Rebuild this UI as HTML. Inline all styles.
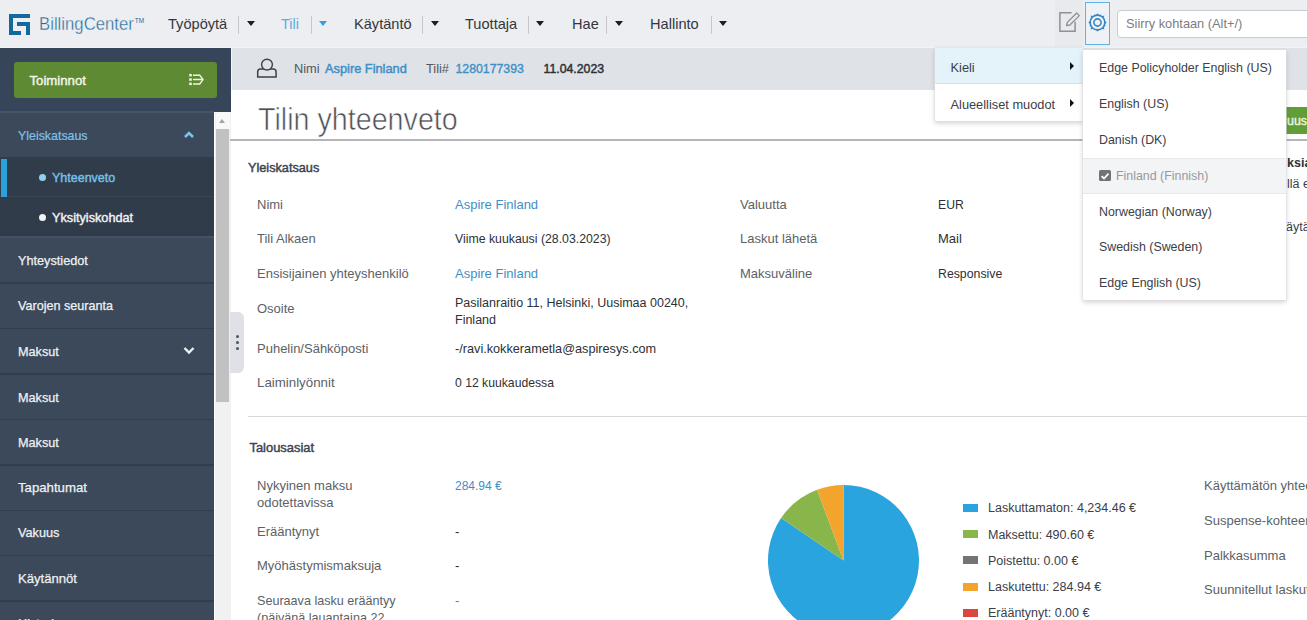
<!DOCTYPE html>
<html><head><meta charset="utf-8">
<style>
*{box-sizing:border-box;margin:0;padding:0}
html,body{width:1307px;height:620px;overflow:hidden;background:#fff;font-family:"Liberation Sans",sans-serif;font-size:13px;color:#3a3f46}
.a{position:absolute;white-space:nowrap}
#hdr{position:absolute;left:0;top:0;width:1307px;height:48px;background:#edeef1;border-bottom:1.5px solid #f3f4f6}
.nav{position:absolute;top:0;height:48px;line-height:48px;font-size:16px;color:#33373d}
.sep{position:absolute;top:12px;width:1px;height:22px;background:#c4c7cc}
.car{position:absolute;top:21.3px;width:0;height:0;border-left:4.5px solid transparent;border-right:4.5px solid transparent;border-top:5px solid #1b1d20}
#side{position:absolute;left:0;top:48px;width:214px;height:572px;background:#3c495a}
#sidetop{position:absolute;left:0;top:48px;width:231px;height:64px;background:#36455a}
.si{position:absolute;left:0;width:214px;height:46px;border-top:1px solid #313e4e;color:#f3f5f7;font-size:13px}
.si span{position:absolute;left:18px;top:50%;transform:translateY(-50%)}
#sub{position:absolute;left:231px;top:48px;width:1076px;height:41.7px;background:#dfe2e7;border-left:1px solid #f3f4f6}
.lbl{position:absolute;white-space:nowrap;color:#5d6166;font-size:13px}
.val{position:absolute;white-space:nowrap;color:#2d3136;font-size:13px}
.lnk{color:#3f8fc6}
.leg{font-size:12.5px}
.menu{position:absolute;background:#fff;box-shadow:0 0 0 0.6px #dfe0e3,0 2px 5px rgba(0,0,0,.2)}
.mi{position:absolute;left:0;width:100%;height:36px;line-height:36px;font-size:12.4px;color:#3c4047;white-space:nowrap}
</style></head><body>
<!-- SIDEBAR -->
<div id="side">
</div>
<div id="sidetop">
  <div class="a" style="left:14px;top:14px;width:203px;height:35.5px;background:#5e8a33;border-radius:3px"></div>
  <div class="a" style="left:29.5px;top:15px;height:35.5px;line-height:35.5px;font-size:13.2px;color:#f4f7ea;-webkit-text-stroke:0.4px #f4f7ea">Toiminnot</div>
  <svg class="a" style="left:186px;top:23px" width="20" height="16" viewBox="0 0 20 16"><g fill="#eef5dc"><rect x="3.2" y="2.9" width="2.6" height="2.5"/><rect x="3.2" y="7.3" width="2.6" height="2.5"/><rect x="3.2" y="11.6" width="2.6" height="2.5"/></g><g fill="none" stroke="#eef5dc" stroke-width="1.5"><path d="M7 4.2H13.6M7 8.6H16.6M7 13H13.6"/><path d="M13.3 3.6L17 8.6L13.3 13.6"/></g></svg>
</div>
<div class="a" style="left:0;top:111px;width:214px;height:1.5px;background:#475466"></div>
<!-- Yleiskatsaus -->
<div class="a" style="left:18px;top:127.5px;line-height:16px;font-size:12.4px;color:#7cc2ea;-webkit-text-stroke:0.2px #7cc2ea">Yleiskatsaus</div>
<svg class="a" style="left:183px;top:130px" width="12" height="9" viewBox="0 0 12 9"><path d="M2 7L6 3L10 7" fill="none" stroke="#7cc2ea" stroke-width="2.6"/></svg>
<!-- sub items -->
<div class="a" style="left:0;top:156.5px;width:214px;height:78px;background:#313c4b"></div>
<div class="a" style="left:0;top:196px;width:214px;height:1px;background:#3a4656"></div>
<div class="a" style="left:1px;top:159px;width:6px;height:38px;background:#2aa2dc"></div>
<div class="a" style="left:39px;top:174px;width:7px;height:7px;border-radius:50%;background:#8fd0ef"></div>
<div class="a" style="left:52px;top:170px;line-height:16px;font-size:12.5px;color:#76c0e8;-webkit-text-stroke:0.4px #76c0e8">Yhteenveto</div>
<div class="a" style="left:39px;top:213.5px;width:7px;height:7px;border-radius:50%;background:#f1f3f5"></div>
<div class="a" style="left:52px;top:210px;line-height:16px;font-size:12.7px;color:#f1f3f5;-webkit-text-stroke:0.4px #f1f3f5">Yksityiskohdat</div>
<!-- main items -->
<div class="a" style="left:0;top:234.5px;width:214px;height:1.5px;background:#2e3a48"></div><div class="a" style="left:0;top:236px;width:214px;height:1.5px;background:#455265"></div>
<div class="a" style="left:18px;top:253px;line-height:16px;font-size:12.7px;color:#eef1f4;-webkit-text-stroke:0.25px #eef1f4">Yhteystiedot</div>
<div class="a" style="left:0;top:282px;width:214px;height:1.5px;background:#323e4e"></div>
<div class="a" style="left:18px;top:298px;line-height:16px;font-size:12.6px;color:#eef1f4;-webkit-text-stroke:0.25px #eef1f4">Varojen seuranta</div>
<div class="a" style="left:0;top:327.5px;width:214px;height:1.5px;background:#323e4e"></div>
<div class="a" style="left:18px;top:344px;line-height:16px;font-size:12.7px;color:#eef1f4;-webkit-text-stroke:0.25px #eef1f4">Maksut</div>
<svg class="a" style="left:183px;top:346px" width="12" height="9" viewBox="0 0 12 9"><path d="M1.5 2L6 6.5L10.5 2" fill="none" stroke="#eef1f4" stroke-width="2.4"/></svg>
<div class="a" style="left:0;top:373px;width:214px;height:1.5px;background:#323e4e"></div>
<div class="a" style="left:18px;top:390px;line-height:16px;font-size:12.7px;color:#eef1f4;-webkit-text-stroke:0.25px #eef1f4">Maksut</div>
<div class="a" style="left:0;top:418.5px;width:214px;height:1.5px;background:#323e4e"></div>
<div class="a" style="left:18px;top:435px;line-height:16px;font-size:12.7px;color:#eef1f4;-webkit-text-stroke:0.25px #eef1f4">Maksut</div>
<div class="a" style="left:0;top:464px;width:214px;height:1.5px;background:#323e4e"></div>
<div class="a" style="left:18px;top:480px;line-height:16px;font-size:13.2px;color:#eef1f4;-webkit-text-stroke:0.25px #eef1f4">Tapahtumat</div>
<div class="a" style="left:0;top:509.5px;width:214px;height:1.5px;background:#323e4e"></div>
<div class="a" style="left:18px;top:525px;line-height:16px;font-size:12.7px;color:#eef1f4;-webkit-text-stroke:0.25px #eef1f4">Vakuus</div>
<div class="a" style="left:0;top:554.5px;width:214px;height:1.5px;background:#323e4e"></div>
<div class="a" style="left:18px;top:571px;line-height:16px;font-size:13.1px;color:#eef1f4;-webkit-text-stroke:0.25px #eef1f4">Käytännöt</div>
<div class="a" style="left:0;top:600px;width:214px;height:1.5px;background:#323e4e"></div>
<div class="a" style="left:18px;top:616px;line-height:16px;font-size:12.7px;color:#eef1f4;-webkit-text-stroke:0.25px #eef1f4">Historia</div>
<!-- scrollbar -->
<div class="a" style="left:214px;top:112px;width:17px;height:508px;background:#f1f1f1;border-left:1.5px solid #fdfdfd"></div>
<div class="a" style="left:215.5px;top:112px;width:14.5px;height:17px;background:#f8f8f8"></div>
<div class="a" style="left:218.5px;top:119px;width:0;height:0;border-left:3.5px solid transparent;border-right:3.5px solid transparent;border-bottom:4px solid #a3a3a3"></div>
<div class="a" style="left:216px;top:129px;width:13px;height:273px;background:#c1c1c1"></div>
<!-- splitter handle -->
<div class="a" style="left:230px;top:312px;width:14px;height:61px;background:#dfe1e6;border-radius:0 6px 6px 0"></div>
<div class="a" style="left:236px;top:334.5px;width:3px;height:3px;border-radius:50%;background:#4d535b"></div>
<div class="a" style="left:236px;top:340.5px;width:3px;height:3px;border-radius:50%;background:#4d535b"></div>
<div class="a" style="left:236px;top:346.5px;width:3px;height:3px;border-radius:50%;background:#4d535b"></div>
<!-- HEADER -->
<div id="hdr">
  <svg class="a" style="left:9px;top:13.5px" width="21" height="21" viewBox="0 0 21 21"><path fill="#116a9b" d="M0 0H21V4H4V17H12V21H0Z M8 8H21V21H17V12H8Z"/></svg>
  <div class="a" style="left:38.5px;top:13px;font-size:18px;line-height:22px;color:#236d9c;transform:scale(0.93,1.02);transform-origin:0 0;-webkit-text-stroke:0.35px #edeef1">BillingCenter<span style="font-size:7px;position:relative;top:-7px;left:1px;-webkit-text-stroke:0">TM</span></div>
  <div class="nav" style="left:168px;font-size:14.6px">Työpöytä</div>
  <div class="sep" style="left:238px;top:16px;height:18px"></div>
  <div class="car" style="left:247px"></div>
  <div class="nav" style="left:281px;font-size:14.6px;color:#5aaee0">Tili</div>
  <div class="sep" style="left:311px;top:16px;height:18px"></div>
  <div class="car" style="left:319px;border-top-color:#2da2dc"></div>
  <div class="nav" style="left:354px;font-size:14.6px">Käytäntö</div>
  <div class="sep" style="left:422px;top:16px;height:18px"></div>
  <div class="car" style="left:431px"></div>
  <div class="nav" style="left:465px;font-size:14.6px">Tuottaja</div>
  <div class="sep" style="left:528px;top:16px;height:18px"></div>
  <div class="car" style="left:536px"></div>
  <div class="nav" style="left:572px;font-size:14.6px">Hae</div>
  <div class="sep" style="left:606px;top:16px;height:18px"></div>
  <div class="car" style="left:615px"></div>
  <div class="nav" style="left:650px;font-size:14.6px">Hallinto</div>
  <div class="sep" style="left:711px;top:16px;height:18px"></div>
  <div class="car" style="left:719px"></div>
  <!-- edit icon -->
  <div class="a" style="left:1055px;top:0;width:28px;height:47px;background:#e9eaed"></div>
  <svg class="a" style="left:1058px;top:10px" width="24" height="24" viewBox="0 0 24 24"><path d="M13.6 2.8H1.9V21.3H17.1V11.8" fill="none" stroke="#8d9095" stroke-width="1.5"/><path d="M8.6 15.6L9.3 12.4L18.7 3L21.3 5.6L11.9 15Z" fill="none" stroke="#8d9095" stroke-width="1.3" stroke-linejoin="round"/></svg>
  <!-- gear box -->
  <div class="a" style="left:1085px;top:2px;width:25px;height:43px;border:1.5px solid #5fb2e2;background:#eef1f5"></div>
  <svg class="a" style="left:1087px;top:11.5px" width="21" height="21" viewBox="0 0 21 21"><circle cx="10.5" cy="10.5" r="7.4" fill="none" stroke="#3586c5" stroke-width="1.7"/><circle cx="10.5" cy="10.5" r="3.6" fill="none" stroke="#3586c5" stroke-width="1.6"/><g fill="#3586c5"><path d="M9 3.6L10.5 1.2L12 3.6Z"/><path d="M9 17.4L10.5 19.8L12 17.4Z"/><path d="M3.6 9L1.2 10.5L3.6 12Z"/><path d="M17.4 9L19.8 10.5L17.4 12Z"/><path d="M4.3 6L3.6 3.6L6 4.3Z"/><path d="M16.7 6L17.4 3.6L15 4.3Z"/><path d="M4.3 15L3.6 17.4L6 16.7Z"/><path d="M16.7 15L17.4 17.4L15 16.7Z"/></g></svg>
  <!-- search -->
  <div class="a" style="left:1117px;top:10px;width:200px;height:28px;background:#fff;border:1px solid #c9ccd1;border-radius:4px"></div>
  <div class="a" style="left:1126px;top:10px;height:28px;line-height:28px;font-size:12.8px;color:#7a7e84">Siirry kohtaan (Alt+/)</div>
</div>
<!-- SUBHEADER -->
<div id="sub"></div>
<svg class="a" style="left:256px;top:58px" width="22" height="21" viewBox="0 0 22 21"><path d="M1.7 19.1V13.8Q1.7 11 4.5 11H17.3Q20.1 11 20.1 13.8V19.1Z" fill="none" stroke="#3d4249" stroke-width="1.5"/><circle cx="11" cy="6.6" r="5.4" fill="#dfe2e7" stroke="#3d4249" stroke-width="1.4"/></svg>
<div class="a" style="left:294px;top:61px;line-height:16px;font-size:12.8px;color:#52575e">Nimi</div>
<div class="a" style="left:325px;top:61px;line-height:16px;font-size:12.8px;color:#3d8fc6;-webkit-text-stroke:0.45px #3d8fc6">Aspire Finland</div>
<div class="a" style="left:426px;top:61px;line-height:16px;font-size:12.8px;color:#52575e">Tili#</div>
<div class="a" style="left:455.5px;top:61px;line-height:16px;font-size:12.3px;color:#3d8fc6;-webkit-text-stroke:0.35px #3d8fc6">1280177393</div>
<div class="a" style="left:543.5px;top:61px;line-height:16px;font-size:12.3px;color:#2d3136;-webkit-text-stroke:0.45px #2d3136">11.04.2023</div>
<!-- TITLE -->
<div class="a" style="left:257.5px;top:99px;line-height:40px;font-size:30.5px;color:#4d5157;transform:scaleX(0.94);transform-origin:0 0;-webkit-text-stroke:0.6px #fff">Tilin yhteenveto</div>
<div class="a" style="left:230px;top:139px;width:1077px;height:2px;background:#b3b5b8"></div>
<!-- SECTION 1 -->
<div class="a" style="left:248px;top:160px;line-height:16px;font-size:12.7px;color:#3c4350;-webkit-text-stroke:0.45px #3c4350">Yleiskatsaus</div>
<div class="lbl" style="left:257px;top:197px;line-height:16px">Nimi</div>
<div class="val lnk" style="left:455px;top:197px;line-height:16px">Aspire Finland</div>
<div class="lbl" style="left:257px;top:231px;line-height:16px">Tili Alkaen</div>
<div class="val" style="left:455px;top:231px;line-height:16px;font-size:12.3px">Viime kuukausi (28.03.2023)</div>
<div class="lbl" style="left:257px;top:266px;line-height:16px">Ensisijainen yhteyshenkilö</div>
<div class="val lnk" style="left:455px;top:266px;line-height:16px">Aspire Finland</div>
<div class="lbl" style="left:257px;top:301px;line-height:16px">Osoite</div>
<div class="val" style="left:455px;top:295px;line-height:17px;font-size:12.5px">Pasilanraitio 11, Helsinki, Uusimaa 00240,<br>Finland</div>
<div class="lbl" style="left:257px;top:341px;line-height:16px">Puhelin/Sähköposti</div>
<div class="val" style="left:455px;top:341px;line-height:16px;font-size:12.7px">-/ravi.kokkerametla@aspiresys.com</div>
<div class="lbl" style="left:257px;top:375px;line-height:16px;font-size:13.3px">Laiminlyönnit</div>
<div class="val" style="left:455px;top:375px;line-height:16px;font-size:12.2px">0 12 kuukaudessa</div>
<div class="lbl" style="left:740px;top:197px;line-height:16px">Valuutta</div>
<div class="val" style="left:938px;top:197px;line-height:16px;font-size:12.2px">EUR</div>
<div class="lbl" style="left:740px;top:231px;line-height:16px">Laskut lähetä</div>
<div class="val" style="left:938px;top:231px;line-height:16px">Mail</div>
<div class="lbl" style="left:740px;top:266px;line-height:16px">Maksuväline</div>
<div class="val" style="left:938px;top:266px;line-height:16px;font-size:12.3px">Responsive</div>
<div class="a" style="left:248px;top:416px;width:1059px;height:1px;background:#d6d8db"></div>
<!-- SECTION 2 -->
<div class="a" style="left:249.5px;top:440px;line-height:16px;font-size:12.9px;color:#3c4350;-webkit-text-stroke:0.45px #3c4350">Talousasiat</div>
<div class="lbl" style="left:257px;top:478px;line-height:16.5px">Nykyinen maksu<br>odotettavissa</div>
<div class="val lnk" style="left:455px;top:478px;line-height:16px;font-size:12px">284.94 €</div>
<div class="lbl" style="left:257px;top:524px;line-height:16px">Erääntynyt</div>
<div class="val" style="left:455px;top:524px;line-height:16px">-</div>
<div class="lbl" style="left:257px;top:558px;line-height:16px">Myöhästymismaksuja</div>
<div class="val" style="left:455px;top:558px;line-height:16px">-</div>
<div class="lbl" style="left:257px;top:593px;line-height:16.5px;font-size:12.6px">Seuraava lasku erääntyy<br>(päivänä lauantaina 22.</div>
<div class="val lnk" style="left:455px;top:593px;line-height:16px">-</div>
<!-- PIE -->
<svg class="a" style="left:760px;top:477px" width="170" height="170" viewBox="0 0 170 170" ><path d="M83.5 83.5L83.50 8.00A75.5 75.5 0 1 1 21.11 40.98Z" fill="#2aa4de"/><path d="M83.5 83.5L21.11 40.98A75.5 75.5 0 0 1 57.09 12.77Z" fill="#89b64a"/><path d="M83.5 83.5L57.09 12.77A75.5 75.5 0 0 1 83.50 8.00Z" fill="#f2a42d"/></svg>
<!-- LEGEND -->
<div class="a" style="left:963px;top:504px;width:15px;height:8px;background:#2aa4de"></div>
<div class="val leg" style="left:988px;top:500px;line-height:16px;color:#3c4047">Laskuttamaton: 4,234.46 €</div>
<div class="a" style="left:963px;top:530px;width:15px;height:8px;background:#89b64a"></div>
<div class="val leg" style="left:988px;top:527px;line-height:16px;color:#3c4047">Maksettu: 490.60 €</div>
<div class="a" style="left:963px;top:556px;width:15px;height:8px;background:#727477"></div>
<div class="val leg" style="left:988px;top:553px;line-height:16px;color:#3c4047">Poistettu: 0.00 €</div>
<div class="a" style="left:963px;top:583px;width:15px;height:8px;background:#f2a42d"></div>
<div class="val leg" style="left:988px;top:579px;line-height:16px;color:#3c4047">Laskutettu: 284.94 €</div>
<div class="a" style="left:963px;top:609px;width:15px;height:8px;background:#d9473f"></div>
<div class="val leg" style="left:988px;top:605px;line-height:16px;color:#3c4047">Erääntynyt: 0.00 €</div>
<!-- right col -->
<div class="lbl" style="left:1204px;top:478px;line-height:16px">Käyttämätön yhteensä</div>
<div class="lbl" style="left:1204px;top:513px;line-height:16px">Suspense-kohteen</div>
<div class="lbl" style="left:1204px;top:548px;line-height:16px">Palkkasumma</div>
<div class="lbl" style="left:1204px;top:582px;line-height:16px">Suunnitellut laskut</div>
<!-- right behind-menu stuff -->
<div class="a" style="left:1270px;top:107px;width:40px;height:27px;background:#629e37;border-radius:2px"></div>
<div class="a" style="left:1287px;top:113px;line-height:16px;font-size:12.4px;color:#f1f7e4;-webkit-text-stroke:0.35px #f1f7e4">uus</div>
<div class="a" style="left:1287px;top:155px;line-height:16px;font-size:12.5px;font-weight:bold;color:#2d3136">ksiat</div>
<div class="a" style="left:1287px;top:176px;line-height:16px;font-size:12.5px;color:#3c4047">llä ei</div>
<div class="a" style="left:1286px;top:219px;line-height:16px;font-size:12.5px;color:#3c4047">äytä</div>
<!-- MENU 1 -->
<div class="menu" style="left:935px;top:48px;width:147.5px;height:73px">
  <div class="mi" style="top:0;background:#e4f2fa;border-bottom:1px solid #d5e3ec"><span style="position:absolute;left:15.5px;top:1.5px;font-size:12.8px">Kieli</span></div>
  <div class="mi" style="top:36px;height:37px;line-height:37px"><span style="position:absolute;left:15.5px;top:1.5px;font-size:12.8px">Alueelliset muodot</span></div>
  <div class="a" style="left:135px;top:14px;width:0;height:0;border-top:4px solid transparent;border-bottom:4px solid transparent;border-left:4.5px solid #111"></div>
  <div class="a" style="left:135px;top:51px;width:0;height:0;border-top:4px solid transparent;border-bottom:4px solid transparent;border-left:4.5px solid #111"></div>
</div>
<!-- MENU 2 -->
<div class="menu" style="left:1083px;top:50px;width:203px;height:250px">
  <div class="mi" style="top:0px"><span style="position:absolute;left:16px">Edge Policyholder English (US)</span></div>
  <div class="mi" style="top:36px"><span style="position:absolute;left:16px">English (US)</span></div>
  <div class="mi" style="top:72px"><span style="position:absolute;left:16px">Danish (DK)</span></div>
  <div class="mi" style="top:107.5px;height:36.5px;background:#f3f4f6;border-top:1px solid #e6e7ea;border-bottom:1px solid #e6e7ea;line-height:34.5px"><span style="position:absolute;left:33px;color:#97999e">Finland (Finnish)</span></div>
  <div class="a" style="left:16px;top:119.5px;width:11.5px;height:11.5px;background:#707378;border-radius:1.5px"></div>
  <svg class="a" style="left:16px;top:119.5px" width="12" height="12" viewBox="0 0 12 12"><path d="M2.6 6.2L5 8.5L9.5 3.6" fill="none" stroke="#fff" stroke-width="1.8"/></svg>
  <div class="mi" style="top:143.5px"><span style="position:absolute;left:16px">Norwegian (Norway)</span></div>
  <div class="mi" style="top:179px"><span style="position:absolute;left:16px">Swedish (Sweden)</span></div>
  <div class="mi" style="top:214.5px"><span style="position:absolute;left:16px">Edge English (US)</span></div>
</div>
</body></html>
